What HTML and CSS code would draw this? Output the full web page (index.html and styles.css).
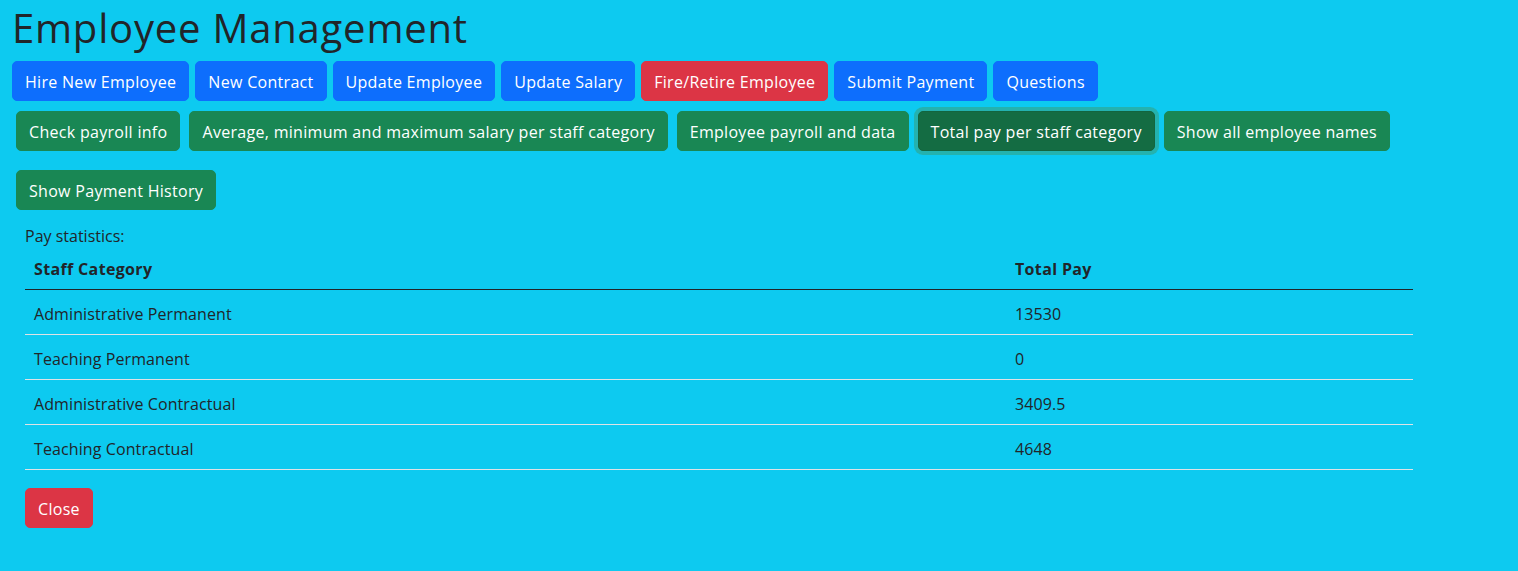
FILE: index.html
```html
<!DOCTYPE html>
<html lang="en">
<head>
<meta charset="utf-8">
<title>Employee Management</title>
<link rel="stylesheet" href="styles.css">
</head>
<body>
<div class="page">
  <h1 class="title">Employee Management</h1>
  <div class="nav-row">
    <button class="btn btn-primary">Hire New Employee</button>
    <button class="btn btn-primary">New Contract</button>
    <button class="btn btn-primary">Update Employee</button>
    <button class="btn btn-primary">Update Salary</button>
    <button class="btn btn-danger">Fire/Retire Employee</button>
    <button class="btn btn-primary">Submit Payment</button>
    <button class="btn btn-primary">Questions</button>
  </div>
  <div class="report-row">
    <button class="btn btn-success">Check payroll info</button>
    <button class="btn btn-success">Average, minimum and maximum salary per staff category</button>
    <button class="btn btn-success">Employee payroll and data</button>
    <button class="btn btn-success active">Total pay per staff category</button>
    <button class="btn btn-success">Show all employee names</button>
    <button class="btn btn-success">Show Payment History</button>
  </div>
  <div class="result">
    <p class="caption">Pay statistics:</p>
    <table class="stats">
      <thead>
        <tr><th class="col-cat">Staff Category</th><th>Total Pay</th></tr>
      </thead>
      <tbody>
        <tr><td>Administrative Permanent</td><td>13530</td></tr>
        <tr><td>Teaching Permanent</td><td>0</td></tr>
        <tr><td>Administrative Contractual</td><td>3409.5</td></tr>
        <tr><td>Teaching Contractual</td><td>4648</td></tr>
      </tbody>
    </table>
    <button class="btn btn-danger close-btn">Close</button>
  </div>
</div>
</body>
</html>
```
FILE: styles.css
```css
html, body {
  margin: 0;
  padding: 0;
  background: #0dcaf0;
  color: #212529;
  font-family: "Open Sans", "Noto Sans", sans-serif;
  font-size: 16px;
  line-height: 1.5;
}
.page {
  min-height: 571px;
  padding: 0 12px;
}
.title {
  margin: 0 0 9px 0;
  padding-top: 4px;
  font-size: 40px;
  font-weight: 400;
  line-height: 1.2;
  letter-spacing: 0.8px;
}
.btn {
  font-family: inherit;
  font-size: 16px;
  line-height: 1.5;
  padding: 8px 12px 6px 12px;
  border: 1px solid transparent;
  border-radius: 5px;
  color: #fff;
  cursor: pointer;
  letter-spacing: 0.3px;
}
.btn-primary { background: #0d6efd; border-color: #0d6efd; }
.btn-danger { background: #dc3545; border-color: #dc3545; }
.btn-success { background: #198754; border-color: #198754; }
.btn-success.active {
  background: #146c43;
  border-color: #13653f;
  box-shadow: 0 0 0 4px rgba(60, 153, 110, 0.5);
}
.nav-row {
  display: flex;
  flex-wrap: wrap;
  gap: 6px;
  margin-bottom: 10px;
}
.report-row {
  display: flex;
  flex-wrap: wrap;
  column-gap: 9px;
  row-gap: 19px;
  padding-left: 4px;
  max-width: 1400px;
}
.result {
  padding: 14px 13px 0 13px;
}
.caption {
  margin: 0 0 1px 0;
}
.stats {
  width: 1388px;
  border-collapse: collapse;
  margin-bottom: 18px;
  letter-spacing: 0.1px;
}
.stats th, .stats td {
  text-align: left;
  padding: 8px 9px;
}
.stats th { font-weight: 700; letter-spacing: 0.35px; }
.col-cat { width: 963px; }
.stats thead tr { border-bottom: 1px solid #212529; }
.stats tbody tr { border-bottom: 1px solid #dee2e6; }
.stats tbody td { padding: 12px 9px 8px 9px; }
```
